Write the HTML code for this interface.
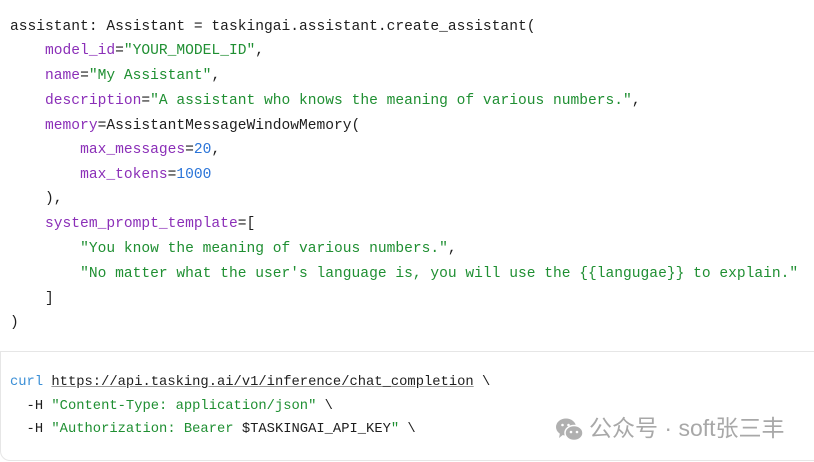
<!DOCTYPE html>
<html><head><meta charset="utf-8"><style>
body{margin:0;width:814px;height:462px;background:#fff;overflow:hidden;position:relative;font-family:"Liberation Mono",monospace;}
.l{position:absolute;left:10px;white-space:pre;font-size:14.6px;line-height:20px;color:#1e1e1e;}
.b .l{font-size:13.8px;}
.p{color:#8b2fb8}.g{color:#1f8f32}.n{color:#2a74d8}.c{color:#3b8fd6}
.u{text-decoration:underline;text-decoration-color:#999}
.box{position:absolute;left:0;top:351px;width:820px;height:108px;border:1px solid #e6e6e6;border-right:none;border-radius:0 0 0 10px;}
.wm{position:absolute;left:589px;top:414px;font-family:"Liberation Sans","Noto Sans CJK SC",sans-serif;font-size:23px;color:#a8a8a8;line-height:28px;white-space:nowrap}
</style></head><body>
<div class="l" style="top:17px">assistant: Assistant = taskingai.assistant.create_assistant(</div>
<div class="l" style="top:41px">    <span class="p">model_id</span>=<span class="g">"YOUR_MODEL_ID"</span>,</div>
<div class="l" style="top:66px">    <span class="p">name</span>=<span class="g">"My Assistant"</span>,</div>
<div class="l" style="top:91px">    <span class="p">description</span>=<span class="g">"A assistant who knows the meaning of various numbers."</span>,</div>
<div class="l" style="top:116px">    <span class="p">memory</span>=AssistantMessageWindowMemory(</div>
<div class="l" style="top:140px">        <span class="p">max_messages</span>=<span class="n">20</span>,</div>
<div class="l" style="top:165px">        <span class="p">max_tokens</span>=<span class="n">1000</span></div>
<div class="l" style="top:189px">    ),</div>
<div class="l" style="top:214px">    <span class="p">system_prompt_template</span>=[</div>
<div class="l" style="top:239px">        <span class="g">"You know the meaning of various numbers."</span>,</div>
<div class="l" style="top:264px">        <span class="g">"No matter what the user's language is, you will use the {{langugae}} to explain."</span></div>
<div class="l" style="top:289px">    ]</div>
<div class="l" style="top:313px">)</div>
<div class="box"></div>
<div class="b">
<div class="l" style="top:373px"><span class="c">curl</span> <span class="u">https://api.tasking.ai/v1/inference/chat_completion</span> \</div>
<div class="l" style="top:397px">  -H <span class="g">"Content-Type: application/json"</span> \</div>
<div class="l" style="top:420px">  -H <span class="g">"Authorization: Bearer </span>$TASKINGAI_API_KEY<span class="g">"</span> \</div>
</div>
<svg style="position:absolute;left:555px;top:417px" width="30" height="26" viewBox="0 0 30 26">
<ellipse cx="11" cy="10" rx="10" ry="8.5" fill="#b0b0b0"/>
<path d="M5 16 L4 21 L9 17Z" fill="#b0b0b0"/>
<ellipse cx="19" cy="16" rx="9" ry="7.5" fill="#b0b0b0" stroke="#fff" stroke-width="1.5"/>
<circle cx="16" cy="15" r="1.3" fill="#fff"/><circle cx="22" cy="15" r="1.3" fill="#fff"/>
<circle cx="7.5" cy="8" r="1.3" fill="#fff"/><circle cx="13.5" cy="8" r="1.3" fill="#fff"/>
</svg>
<div class="wm">公众号 · soft张三丰</div>
</body></html>
